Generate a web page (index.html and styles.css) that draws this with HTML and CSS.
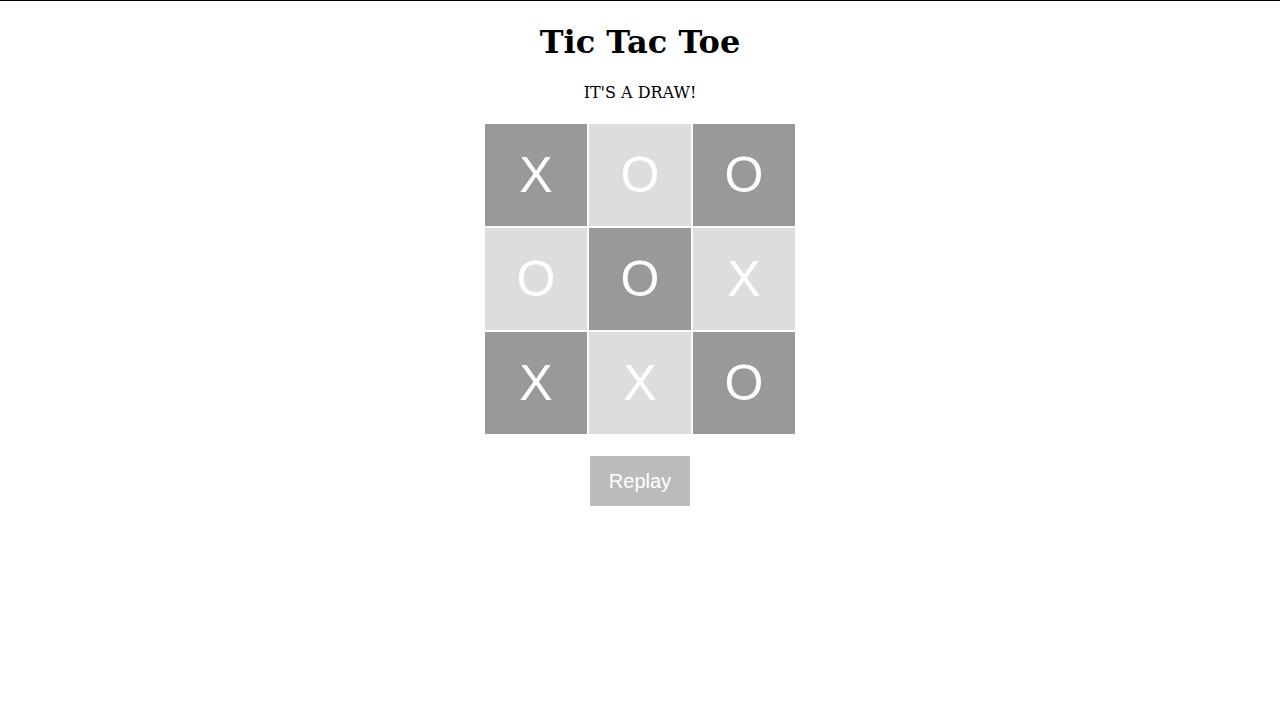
FILE: index.html
```html
<!DOCTYPE html>
<html>
<head>
<meta charset="utf-8">
<title>Tic Tac Toe</title>
<link rel="stylesheet" href="styles.css">
</head>
<body>
<div class="game">
  <h1 class="title">Tic Tac Toe</h1>
  <div class="status">IT'S A DRAW!</div>
  <div class="board">
    <div class="cell dark">X</div>
    <div class="cell light">O</div>
    <div class="cell dark">O</div>
    <div class="cell light">O</div>
    <div class="cell dark">O</div>
    <div class="cell light">X</div>
    <div class="cell dark">X</div>
    <div class="cell light">X</div>
    <div class="cell dark">O</div>
  </div>
  <button class="replay">Replay</button>
</div>
</body>
</html>
```
FILE: styles.css
```css
html, body {
  margin: 0;
  padding: 0;
  background: #fff;
}
body {
  border-top: 1px solid #000;
  font-family: "DejaVu Serif", serif;
  color: #000;
}
.game {
  display: flex;
  flex-direction: column;
  align-items: center;
}
.title {
  font-size: 32px;
  font-weight: bold;
  margin: 23px 0 0 0;
  line-height: 37px;
}
.status {
  font-size: 16px;
  margin-top: 22px;
  line-height: 19px;
}
.board {
  margin-top: 22px;
  display: grid;
  grid-template-columns: repeat(3, 102px);
  grid-template-rows: repeat(3, 102px);
  gap: 2px;
}
.cell {
  display: flex;
  align-items: center;
  justify-content: center;
  color: #fff;
  font-family: "Liberation Sans", Arial, sans-serif;
  font-size: 50px;
}
.dark { background: #999; }
.light { background: #ddd; }
.replay {
  margin-top: 22px;
  width: 100px;
  height: 50px;
  border: none;
  background: #bbb;
  color: #fff;
  font-family: "Liberation Sans", Arial, sans-serif;
  font-size: 20px;
  padding: 0;
}
```
